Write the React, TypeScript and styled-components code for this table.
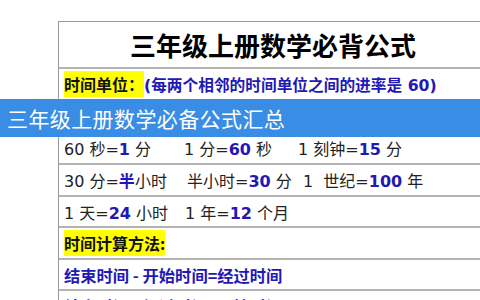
import React from "react";
import styled, { createGlobalStyle } from "styled-components";

const Global = createGlobalStyle`
  html, body { margin: 0; padding: 0; background: #fff; }
  body { width: 480px; height: 300px; overflow: hidden; }
`;

const Page = styled.div`
  position: relative;
  width: 480px;
  height: 300px;
  overflow: hidden;
  background: #fff;
  padding: 21px 0 0 58px;
  box-sizing: border-box;
  font-family: "DejaVu Sans", "Noto Sans CJK SC", sans-serif;
`;

const Table = styled.div`
  width: 428px;
  border-top: 1px solid #9a9a9a;
  border-left: 1px solid #9a9a9a;
  display: flex;
  flex-direction: column;
`;

const Row = styled.div<{ $h: number; $center?: boolean }>`
  height: ${(p) => p.$h}px;
  box-sizing: border-box;
  border-bottom: 2px solid #b4b4b4;
  display: flex;
  align-items: center;
  justify-content: ${(p) => (p.$center ? "center" : "flex-start")};
  padding-left: ${(p) => (p.$center ? 0 : 5)}px;
  font-size: 16px;
  color: #222;
  white-space: nowrap;
`;

const Title = styled.h1`
  margin: 0;
  font-family: "Noto Sans CJK SC", sans-serif;
  font-size: 26px;
  font-weight: 700;
  color: #000;
  letter-spacing: 0;
`;

const Mark = styled.span`
  background: #ffff00;
  color: #111;
  font-weight: 700;
  font-family: "Noto Sans CJK SC", sans-serif;
  padding: 1px 0;
`;

const Note = styled.span`
  color: #2318b4;
  font-weight: 700;
  font-size: 15.7px;
`;

const Seg = styled.span<{ $w?: number }>`
  display: inline-block;
  width: ${(p) => (p.$w ? `${p.$w}px` : "auto")};
  font-size: 16px;
  color: #222;
`;

const Num = styled.b`
  color: #2318b4;
  font-weight: 700;
`;

const Formula = styled.span`
  color: #2318b4;
  font-weight: 700;
  font-size: 16.3px;
  font-family: "Noto Sans CJK SC", sans-serif;
`;

const Banner = styled.div`
  position: absolute;
  left: 0;
  top: 99px;
  width: 100%;
  height: 38px;
  background: #3a8de4;
  color: #fff;
  font-family: "Noto Sans CJK SC", sans-serif;
  font-size: 21px;
  letter-spacing: 0.4px;
  line-height: 38px;
  padding-left: 7px;
  box-sizing: border-box;
`;

export default function App() {
  return (
    <Page>
      <Global />
      <Table>
        <Row $h={47} $center>
          <Title>三年级上册数学必背公式</Title>
        </Row>
        <Row $h={32}>
          <Mark>时间单位：</Mark>
          <Note>(每两个相邻的时间单位之间的进率是 60)</Note>
        </Row>
        <Row $h={32} />
        <Row $h={32}>
          <Seg $w={120}>60 秒=<Num>1</Num> 分</Seg>
          <Seg $w={114}>1 分=<Num>60</Num> 秒</Seg>
          <Seg>1 刻钟=<Num>15</Num> 分</Seg>
        </Row>
        <Row $h={32}>
          <Seg $w={123}>30 分=<Num>半</Num>小时</Seg>
          <Seg $w={116}>半小时=<Num>30</Num> 分</Seg>
          <Seg>1 &nbsp;世纪=<Num>100</Num> 年</Seg>
        </Row>
        <Row $h={31}>
          <Seg $w={121}>1 天=<Num>24</Num> 小时</Seg>
          <Seg>1 年=<Num>12</Num> 个月</Seg>
        </Row>
        <Row $h={32}>
          <Mark>时间计算方法:</Mark>
        </Row>
        <Row $h={31}>
          <Formula>结束时间 - 开始时间=经过时间</Formula>
        </Row>
        <Row $h={32}>
          <Formula>结束时间 - 经过时间=开始时间</Formula>
        </Row>
      </Table>
      <Banner>三年级上册数学必备公式汇总</Banner>
    </Page>
  );
}
